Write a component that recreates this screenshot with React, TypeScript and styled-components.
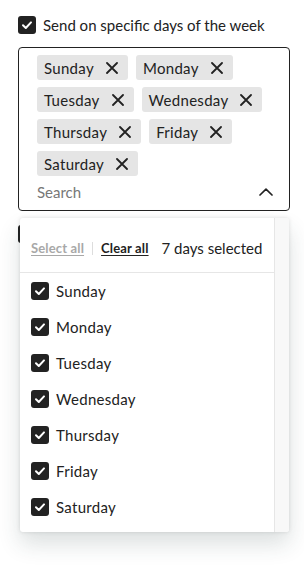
import React from "react";
import styled, { createGlobalStyle } from "styled-components";

const Global = createGlobalStyle`
  html, body { margin: 0; padding: 0; background: #fff; }
  body { font-family: Lato, "Noto Sans", sans-serif; color: #222; }
`;

const Page = styled.div`
  width: 304px;
  height: 565px;
  overflow: hidden;
  padding: 16px 14px 0 18px;
  box-sizing: border-box;
`;

const CheckRow = styled.label<{ $mt?: number }>`
  display: flex;
  align-items: center;
  gap: 7px;
  height: 18px;
  margin-top: ${(p) => p.$mt ?? 0}px;
  font-size: 15px;
  color: #222;
  white-space: nowrap;
`;

const Box = styled.span`
  width: 18px;
  height: 18px;
  flex: 0 0 18px;
  border-radius: 3px;
  background: #222;
  display: flex;
  align-items: center;
  justify-content: center;
`;

const Check = () => (
  <Box>
    <svg width="14" height="14" viewBox="0 0 14 14">
      <path d="M3 7.3 L5.8 10 L11 4.4" fill="none" stroke="#fff" strokeWidth="2" strokeLinecap="round" strokeLinejoin="round" />
    </svg>
  </Box>
);

const SelectWrap = styled.div`
  position: relative;
  margin-top: 13px;
`;

const SelectBox = styled.div`
  border: 1px solid #222;
  border-radius: 4px;
  padding: 7px 10px 8px 18px;
  position: relative;
`;

const Chips = styled.div`
  display: flex;
  flex-wrap: wrap;
  gap: 7px 8px;
`;

const Chip = styled.span`
  display: inline-flex;
  align-items: center;
  height: 25px;
  padding: 0 10px 0 7px;
  gap: 12px;
  background: #e5e5e5;
  border-radius: 3px;
  font-size: 15px;
  letter-spacing: 0.3px;
  color: #222;
`;

const XIcon = () => (
  <svg width="12" height="12" viewBox="0 0 12 12">
    <path d="M1 1 L11 11 M11 1 L1 11" stroke="#222" strokeWidth="1.8" strokeLinecap="round" />
  </svg>
);

const SearchRow = styled.div`
  height: 20px;
  margin-top: 6px;
  display: flex;
  align-items: center;
  font-size: 15px;
  color: #777;
`;

const Chevron = styled.span`
  position: absolute;
  right: 16px;
  bottom: 14px;
  display: flex;
`;

const Dropdown = styled.div`
  position: absolute;
  top: calc(100% + 7px);
  left: 2px;
  right: 1px;
  background: #fff;
  border-radius: 3px;
  display: grid;
  grid-template-columns: 1fr 15px;
  box-shadow: 0 12px 22px rgba(40, 60, 60, 0.16), 0 0 4px rgba(0, 0, 0, 0.12);
  z-index: 2;
`;

const DropMain = styled.div``;

const Track = styled.div`
  background: #f8f8f8;
  border-left: 1px solid #e6e6e6;
  border-radius: 0 3px 3px 0;
`;

const Header = styled.div`
  height: 55px;
  box-sizing: border-box;
  padding: 6px 0 0 11px;
  display: flex;
  align-items: center;
  border-bottom: 1px solid #e6e6e6;
  white-space: nowrap;
`;

const LinkBtn = styled.span<{ $muted?: boolean }>`
  font-size: 13px;
  font-weight: 700;
  letter-spacing: 0.15px;
  line-height: 16px;
  text-decoration: underline;
  text-underline-offset: 2px;
  color: ${(p) => (p.$muted ? "#a8a8a8" : "#222")};
`;

const Sep = styled.span`
  width: 1px;
  height: 13px;
  background: #ddd;
  margin: 0 8px;
`;

const Count = styled.span`
  font-size: 15px;
  line-height: 18px;
  margin-left: 13px;
  color: #222;
`;

const List = styled.div`
  padding-bottom: 7px;
`;

const Item = styled.div`
  height: 36px;
  display: flex;
  align-items: center;
  gap: 7px;
  padding-left: 11px;
  font-size: 15px;
  letter-spacing: 0.3px;
  color: #222;
`;

const days = ["Sunday", "Monday", "Tuesday", "Wednesday", "Thursday", "Friday", "Saturday"];

export default function App() {
  return (
    <>
      <Global />
      <Page>
        <CheckRow>
          <Check />
          Send on specific days of the week
        </CheckRow>
        <SelectWrap>
          <SelectBox>
            <Chips>
              {days.map((d) => (
                <Chip key={d}>
                  {d}
                  <XIcon />
                </Chip>
              ))}
            </Chips>
            <SearchRow>Search</SearchRow>
            <Chevron>
              <svg width="14" height="8" viewBox="0 0 14 8">
                <path d="M1 7 L7 1.2 L13 7" fill="none" stroke="#222" strokeWidth="1.7" strokeLinecap="round" strokeLinejoin="round" />
              </svg>
            </Chevron>
          </SelectBox>
          <Dropdown>
            <DropMain>
              <Header>
                <LinkBtn $muted>Select all</LinkBtn>
                <Sep />
                <LinkBtn>Clear all</LinkBtn>
                <Count>7 days selected</Count>
              </Header>
              <List>
                {days.map((d) => (
                  <Item key={d}>
                    <Check />
                    {d}
                  </Item>
                ))}
              </List>
            </DropMain>
            <Track />
          </Dropdown>
        </SelectWrap>
        <CheckRow $mt={14}>
          <Check />
        </CheckRow>
      </Page>
    </>
  );
}
